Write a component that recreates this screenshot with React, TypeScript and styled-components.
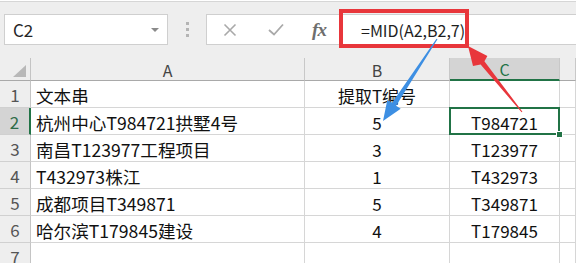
import React from "react";
import styled, { createGlobalStyle, css } from "styled-components";

const GlobalStyle = createGlobalStyle`
  html, body { margin: 0; padding: 0; background: #ffffff; overflow: hidden; }
  body { font-family: "Noto Sans CJK SC", "Noto Sans", sans-serif; }
`;

const Page = styled.div`
  position: relative;
  width: 576px;
  height: 263px;
  overflow: hidden;
  background: #ffffff;
`;

const Toolbar = styled.div`
  height: 57px;
  box-sizing: border-box;
  background: #eeeeee;
  border-top: 1px solid #d6d6d6;
  margin-top: 1px;
  padding: 12px 0 0 4px;
  display: flex;
  align-items: flex-start;
`;

const NameBox = styled.div`
  width: 164px;
  height: 31px;
  box-sizing: border-box;
  background: #ffffff;
  border: 1px solid #cfcfcf;
  display: flex;
  align-items: center;
  padding: 0 8px 0 8px;
  font-size: 17px;
  color: #262626;
`;

const DropArrow = styled.span`
  margin-left: auto;
  width: 0;
  height: 0;
  border-left: 4px solid transparent;
  border-right: 4px solid transparent;
  border-top: 4px solid #8a8a8a;
`;

const Grip = styled.div`
  width: 38px;
  height: 31px;
  display: flex;
  flex-direction: column;
  align-items: center;
  justify-content: center;
  gap: 3px;
`;

const GripDot = styled.span`
  width: 3px;
  height: 3px;
  background: #b4b4b4;
`;

const FormulaBox = styled.div`
  flex: 1;
  height: 31px;
  box-sizing: border-box;
  background: #ffffff;
  border: 1px solid #cfcfcf;
  border-right: none;
  display: flex;
  align-items: center;
`;

const IconSlot = styled.div<{ $w: number }>`
  width: ${(p) => p.$w}px;
  height: 100%;
  display: flex;
  align-items: center;
  justify-content: center;
  color: #a8a8a8;
`;

const Fx = styled.span`
  font-family: "Liberation Serif", "DejaVu Serif", serif;
  font-style: italic;
  font-weight: bold;
  font-size: 19px;
  color: #6e6e6e;
  letter-spacing: -1px;
`;

const FormulaInput = styled.div`
  flex: 1;
  height: 100%;
  border-left: 1px solid #d8d8d8;
  display: flex;
  align-items: center;
  padding-left: 21px;
  font-size: 16px;
  color: #1e1e1e;
`;

const Sheet = styled.div`
  display: grid;
  grid-template-columns: 31px 274px 145px 110px 1fr;
  grid-template-rows: 23px repeat(7, 27px);
`;

const Corner = styled.div`
  background: #eeeeee;
  border-right: 1px solid #c4c4c4;
  border-bottom: 1px solid #a9a9a9;
  box-sizing: border-box;
  display: flex;
  align-items: flex-end;
  justify-content: flex-end;
  padding: 0 4px 3px 0;
`;

const CornerTriangle = styled.span`
  width: 0;
  height: 0;
  border-left: 13px solid transparent;
  border-bottom: 12px solid #b8b8b8;
`;

const ColHead = styled.div<{ $active?: boolean }>`
  box-sizing: border-box;
  background: ${(p) => (p.$active ? "#d4d4d4" : "#eeeeee")};
  border-right: 1px solid #c8c8c8;
  border-bottom: ${(p) => (p.$active ? "2px solid #217346" : "1px solid #a9a9a9")};
  display: flex;
  align-items: center;
  justify-content: center;
  font-size: 16px;
  color: ${(p) => (p.$active ? "#217346" : "#444444")};
  padding-top: 1px;
`;

const RowHead = styled.div<{ $active?: boolean }>`
  box-sizing: border-box;
  background: ${(p) => (p.$active ? "#d4d4d4" : "#eeeeee")};
  border-right: ${(p) => (p.$active ? "2px solid #217346" : "1px solid #c4c4c4")};
  border-bottom: 1px solid #d0d0d0;
  display: flex;
  align-items: center;
  justify-content: center;
  font-size: 17px;
  color: ${(p) => (p.$active ? "#2f6b48" : "#555555")};
  padding-top: 1px;
`;

const Cell = styled.div<{ $align?: "left" | "center"; $selected?: boolean }>`
  position: relative;
  box-sizing: border-box;
  border-right: 1px solid #d6d6d6;
  border-bottom: 1px solid #d6d6d6;
  display: flex;
  align-items: center;
  justify-content: ${(p) => (p.$align === "center" ? "center" : "flex-start")};
  padding: 2px 0 0 ${(p) => (p.$align === "center" ? "0" : "5px")};
  font-size: ${(p) => (p.$align === "center" ? "17px" : "17.6px")};
  color: #111111;
  white-space: nowrap;
  ${(p) =>
    p.$selected &&
    css`
      &::after {
        content: "";
        position: absolute;
        left: -1px;
        top: -1px;
        right: -1px;
        bottom: -1px;
        border: 2px solid #217346;
      }
      &::before {
        content: "";
        position: absolute;
        right: -4px;
        bottom: -4px;
        width: 5px;
        height: 5px;
        background: #217346;
        border: 1px solid #ffffff;
        z-index: 1;
      }
    `}
`;

const Overlay = styled.svg`
  position: absolute;
  left: 0;
  top: 0;
  pointer-events: none;
`;

type Row = [string, string, string];

const rows: Row[] = [
  ["文本串", "提取T编号", ""],
  ["杭州中心T984721拱墅4号", "5", "T984721"],
  ["南昌T123977工程项目", "3", "T123977"],
  ["T432973株江", "1", "T432973"],
  ["成都项目T349871", "5", "T349871"],
  ["哈尔滨T179845建设", "4", "T179845"],
  ["", "", ""],
];

export default function App() {
  return (
    <Page>
      <GlobalStyle />
      <Toolbar>
        <NameBox>
          C2
          <DropArrow />
        </NameBox>
        <Grip>
          <GripDot />
          <GripDot />
          <GripDot />
        </Grip>
        <FormulaBox>
          <IconSlot $w={46}>
            <svg width="14" height="14" viewBox="0 0 14 14">
              <path d="M1.5 1.5 L12.5 12.5 M12.5 1.5 L1.5 12.5" stroke="#a9a9a9" strokeWidth="1.6" fill="none" />
            </svg>
          </IconSlot>
          <IconSlot $w={46}>
            <svg width="16" height="13" viewBox="0 0 16 13">
              <path d="M1 7 L6 11.5 L15 1.5" stroke="#a9a9a9" strokeWidth="1.8" fill="none" />
            </svg>
          </IconSlot>
          <IconSlot $w={40}>
            <Fx>fx</Fx>
          </IconSlot>
          <FormulaInput>=MID(A2,B2,7)</FormulaInput>
        </FormulaBox>
      </Toolbar>
      <Sheet>
        <Corner>
          <CornerTriangle />
        </Corner>
        <ColHead>A</ColHead>
        <ColHead>B</ColHead>
        <ColHead $active>C</ColHead>
        <ColHead />
        {rows.map((r, i) => (
          <React.Fragment key={i}>
            <RowHead $active={i === 1}>{i + 1}</RowHead>
            <Cell>{r[0]}</Cell>
            <Cell $align="center">{r[1]}</Cell>
            <Cell $align="center" $selected={i === 1}>
              {r[2]}
            </Cell>
            <Cell />
          </React.Fragment>
        ))}
      </Sheet>
      <Overlay width="576" height="263" viewBox="0 0 576 263">
        <rect x="341" y="11" width="126" height="35" fill="none" stroke="#e8363b" strokeWidth="4" />
        <polygon
          points="522.4,111.7 484.4,61.2 487.4,56 468,46 473,66 480.6,64.4 521.6,112.3"
          fill="#e8363b"
        />
        <polygon
          points="437.5,39.3 396.1,105.7 400.7,108.7 383,121 387.3,99.9 391.9,102.9 436.5,38.7"
          fill="#3d8fe3"
        />
      </Overlay>
    </Page>
  );
}
